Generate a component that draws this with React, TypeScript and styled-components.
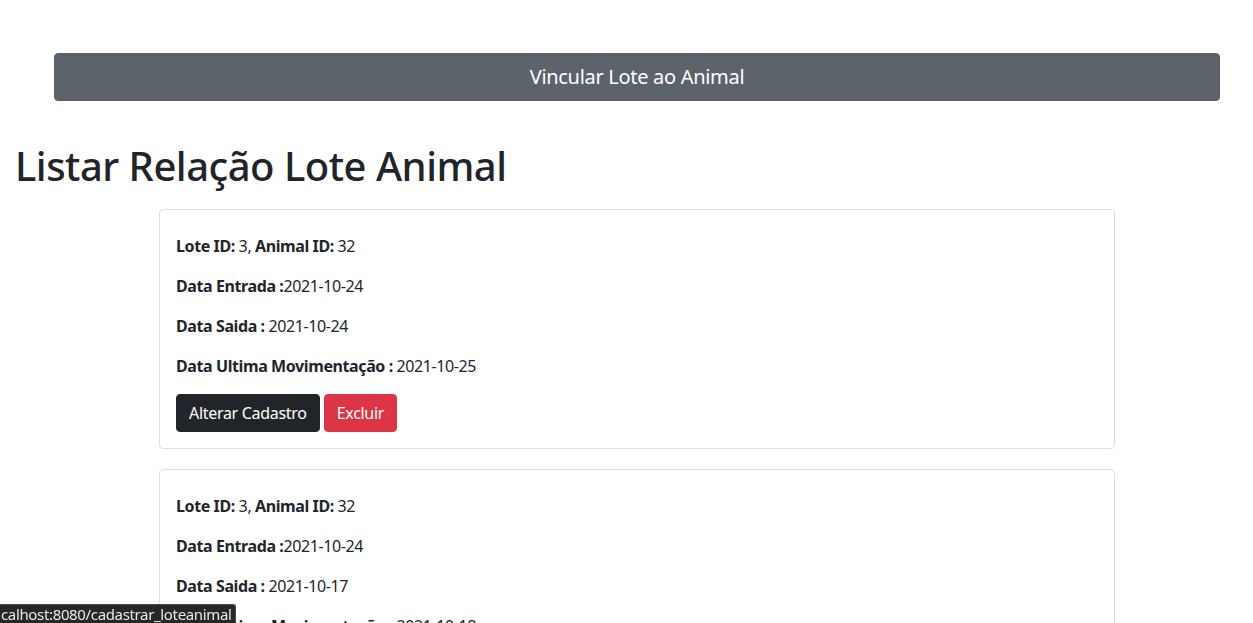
import React from "react";
import styled, { createGlobalStyle } from "styled-components";

const GlobalStyle = createGlobalStyle`
  html, body { margin: 0; padding: 0; background: #fff; }
  body {
    font-family: "Noto Sans", "Open Sans", sans-serif;
    font-size: 16px;
    line-height: 1.5;
    color: #212529;
  }
  * { box-sizing: border-box; }
`;

const Page = styled.div`
  display: flex;
  flex-direction: column;
  padding-top: 53px;
  min-height: 623px;
  overflow: hidden;
`;

const TopBar = styled.div`
  padding: 0 33px 0 54px;
`;

const PrimaryAction = styled.button`
  display: block;
  width: 100%;
  height: 48px;
  border: 1px solid #565e64;
  border-radius: 4px;
  background: #5c636a;
  color: #fff;
  font-family: inherit;
  font-size: 20px;
  line-height: 1.5;
  letter-spacing: -0.3px;
  cursor: pointer;
`;

const Title = styled.h1`
  margin: 41px 0 19px 15px;
  font-size: 40px;
  font-weight: 500;
  line-height: 1.2;
  letter-spacing: -0.5px;
`;

const List = styled.div`
  display: flex;
  flex-direction: column;
  gap: 20px;
  padding: 0 138px 0 159px;
`;

const Card = styled.div`
  border: 1px solid #dfdfdf;
  border-radius: 4px;
  padding: 24px 16px 16px;
`;

const Line = styled.p`
  margin: 0 0 16px;
  font-size: 16px;
  line-height: 24px;
  letter-spacing: -0.4px;
`;

const Actions = styled.div`
  display: flex;
  gap: 4px;
`;

const Btn = styled.button<{ $variant: "dark" | "danger" }>`
  height: 38px;
  padding: 0 12px;
  border: 1px solid ${(p) => (p.$variant === "dark" ? "#212529" : "#dc3545")};
  border-radius: 4px;
  background: ${(p) => (p.$variant === "dark" ? "#212529" : "#dc3545")};
  color: #fff;
  font-family: inherit;
  font-size: 16px;
  line-height: 24px;
  letter-spacing: -0.3px;
  cursor: pointer;
`;

const StatusBar = styled.div`
  position: fixed;
  left: 0;
  bottom: 0;
  height: 19px;
  padding: 0 3px 0 1px;
  background: #272727;
  color: #e8e8e8;
  font-size: 15px;
  line-height: 19px;
  letter-spacing: -0.35px;
  border-top-right-radius: 3px;
  border: 1px solid #4a4a4a;
  border-left: none;
  border-bottom: none;
`;

type Rel = { lote: number; animal: number; entrada: string; saida: string; ultima: string };

const data: Rel[] = [
  { lote: 3, animal: 32, entrada: "2021-10-24", saida: "2021-10-24", ultima: "2021-10-25" },
  { lote: 3, animal: 32, entrada: "2021-10-24", saida: "2021-10-17", ultima: "2021-10-18" },
];

export default function App() {
  return (
    <>
      <GlobalStyle />
      <Page>
        <TopBar>
          <PrimaryAction>Vincular Lote ao Animal</PrimaryAction>
        </TopBar>
        <Title>Listar Relação Lote Animal</Title>
        <List>
          {data.map((r, i) => (
            <Card key={i}>
              <Line>
                <b>Lote ID:</b> {r.lote}, <b>Animal ID:</b> {r.animal}
              </Line>
              <Line>
                <b>Data Entrada :</b>
                {r.entrada}
              </Line>
              <Line>
                <b>Data Saida :</b> {r.saida}
              </Line>
              <Line>
                <b>Data Ultima Movimentação :</b> {r.ultima}
              </Line>
              <Actions>
                <Btn $variant="dark">Alterar Cadastro</Btn>
                <Btn $variant="danger">Excluir</Btn>
              </Actions>
            </Card>
          ))}
        </List>
      </Page>
      <StatusBar>calhost:8080/cadastrar_loteanimal</StatusBar>
    </>
  );
}
